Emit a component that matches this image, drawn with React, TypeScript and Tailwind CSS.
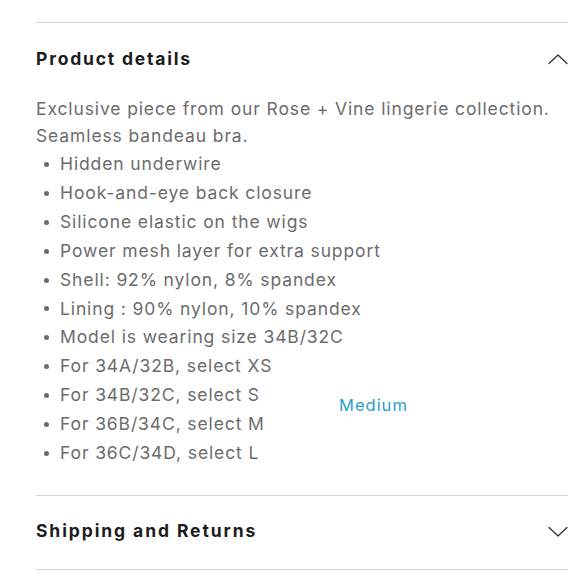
const DETAILS = [
  'Hidden underwire',
  'Hook-and-eye back closure',
  'Silicone elastic on the wigs',
  'Power mesh layer for extra support',
  'Shell: 92% nylon, 8% spandex',
  'Lining : 90% nylon, 10% spandex',
  'Model is wearing size 34B/32C',
  'For 34A/32B, select XS',
  'For 34B/32C, select S',
  'For 36B/34C, select M',
  'For 36C/34D, select L',
];

function Chevron({ up }: { up?: boolean }) {
  return (
    <svg width="20" height="11" viewBox="0 0 20 11" fill="none" stroke="#333" strokeWidth="1.3" strokeLinecap="round" strokeLinejoin="round">
      <polyline points={up ? '1,9.5 10,1 19,9.5' : '1,1.5 10,10 19,1.5'} />
    </svg>
  );
}

export default function App() {
  return (
    <div className="w-[580px] h-[580px] bg-white pl-[36px] pr-[12px] pt-[22px] font-['Inter',sans-serif]">
      <section className="border-t border-[#d6d6d6]">
        <div className="flex items-center justify-between h-[72px]">
          <h2 className="text-[17.5px] font-bold tracking-[1.8px] text-[#1c1c1c]">Product details</h2>
          <Chevron up />
        </div>
        <div className="relative text-[17.5px] tracking-[0.88px] text-[#6c6c6c] pb-[27px]">
          <p className="leading-[27px]">
            Exclusive piece from our Rose + Vine lingerie collection.
            <br />
            Seamless bandeau bra.
          </p>
          <ul className="mt-[1px]">
            {DETAILS.map(d => (
              <li key={d} className="flex items-center leading-[28.9px]">
                <span className="w-[5px] h-[5px] rounded-full bg-[#6c6c6c] ml-[8px] mr-[11px]" />
                {d}
              </li>
            ))}
          </ul>
          <span className="absolute left-[303px] top-[298px] text-[16.5px] tracking-[1px] text-[#2b9fc7]">Medium</span>
        </div>
      </section>
      <section className="border-t border-b border-[#d6d6d6]">
        <div className="flex items-center justify-between h-[73px] pb-[2px]">
          <h2 className="text-[17.5px] font-bold tracking-[1.9px] text-[#1c1c1c]">Shipping and Returns</h2>
          <Chevron />
        </div>
      </section>
    </div>
  );
}
